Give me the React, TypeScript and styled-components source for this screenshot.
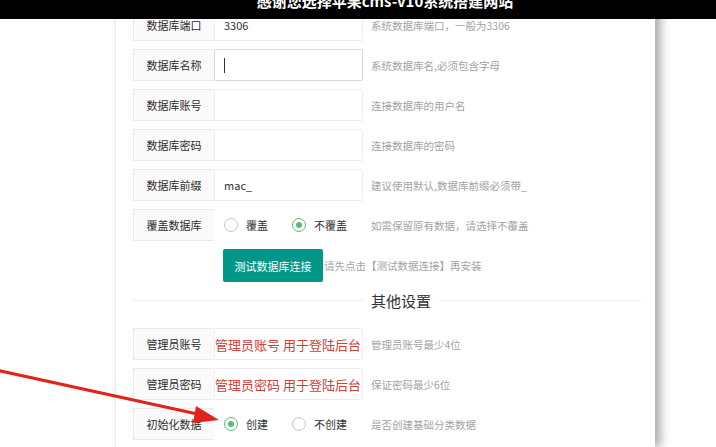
import * as React from 'react';
import styled, { createGlobalStyle } from 'styled-components';

const GlobalStyle = createGlobalStyle`
  html, body {
    margin: 0;
    padding: 0;
    background: #fff;
    font-family: "Noto Sans CJK SC", "Noto Sans", sans-serif;
  }
`;

const Page = styled.div`
  position: relative;
  width: 716px;
  height: 447px;
  overflow: hidden;
  background: #fff;
`;

const TopBar = styled.div`
  position: absolute;
  top: 0;
  left: 0;
  right: 0;
  height: 19px;
  background: #000;
  overflow: hidden;
  z-index: 2;
  display: flex;
  justify-content: center;
`;

const TopTitle = styled.div`
  color: #fff;
  font-size: 15px;
  font-weight: 700;
  line-height: 15px;
  margin-top: -7px;
  margin-left: 54px;
  white-space: nowrap;
`;

const Card = styled.div`
  margin-left: 115px;
  width: 540px;
  height: 447px;
  box-sizing: border-box;
  padding: 9px 0 0 17px;
  background: #fff;
  border-left: 1px solid #ececec;
  box-shadow: 6px 0 9px rgba(0, 0, 0, 0.32);
`;

const Form = styled.div`
  display: flex;
  flex-direction: column;
  gap: 8px;
`;

const Row = styled.div`
  display: flex;
  align-items: center;
  height: 32px;
`;

const Label = styled.div`
  width: 81px;
  height: 32px;
  box-sizing: border-box;
  border: 1px solid #eaeaea;
  border-right: none;
  background: #fafafa;
  color: #2e2e2e;
  font-size: 11px;
  display: flex;
  align-items: center;
  justify-content: center;
`;

const Input = styled.div<{ $focused?: boolean; $danger?: boolean }>`
  width: 149px;
  height: 32px;
  box-sizing: border-box;
  border: 1px solid ${(p) => (p.$focused ? '#d6d6d6' : '#eeeeee')};
  border-radius: 2px;
  background: #fff;
  padding-left: ${(p) => (p.$danger ? '0' : '9px')};
  color: ${(p) => (p.$danger ? '#c9423a' : '#333')};
  font-size: ${(p) => (p.$danger ? '13px' : '11px')};
  display: flex;
  align-items: center;
  white-space: nowrap;
  overflow: hidden;
`;

const Caret = styled.span`
  display: inline-block;
  width: 1px;
  height: 15px;
  background: #333;
`;

const Hint = styled.div<{ $tight?: boolean }>`
  margin-left: ${(p) => (p.$tight ? '1px' : '8px')};
  color: #a3a3a3;
  font-size: 10.5px;
  white-space: nowrap;
`;

const RadioGroup = styled.div`
  width: 149px;
  box-sizing: border-box;
  padding-left: 10px;
  display: flex;
  align-items: center;
  gap: 24px;
`;

const RadioItem = styled.div`
  display: flex;
  align-items: center;
  gap: 8px;
  font-size: 11px;
  color: #333;
`;

const RadioCircle = styled.span<{ $checked?: boolean }>`
  width: 14px;
  height: 14px;
  box-sizing: border-box;
  border-radius: 50%;
  border: 1px solid ${(p) => (p.$checked ? '#5fb878' : '#c6c6c6')};
  display: flex;
  align-items: center;
  justify-content: center;
  &::after {
    content: '';
    width: 6px;
    height: 6px;
    border-radius: 50%;
    background: ${(p) => (p.$checked ? '#5fb878' : 'transparent')};
  }
`;

const ButtonRow = styled.div`
  display: flex;
  align-items: center;
  padding-left: 90px;
  margin-top: 8px;
`;

const Button = styled.div`
  width: 100px;
  height: 33px;
  border-radius: 2px;
  background: #009688;
  color: #fff;
  font-size: 11px;
  display: flex;
  align-items: center;
  justify-content: center;
`;

const Legend = styled.div`
  width: 508px;
  height: 20px;
  margin: 8px 0 18px;
  display: flex;
  align-items: center;
  &::before,
  &::after {
    content: '';
    height: 1px;
    background: #eeeeee;
  }
  &::before {
    width: 230px;
  }
  &::after {
    flex: 1;
  }
`;

const LegendText = styled.span`
  padding: 0 8px;
  font-size: 15px;
  color: #333;
`;

const Arrow = styled.svg`
  position: absolute;
  left: 0;
  top: 0;
  pointer-events: none;
  z-index: 3;
`;

type Option = { label: string; checked?: boolean };

const Radios = ({ options }: { options: Option[] }) => (
  <RadioGroup>
    {options.map((o) => (
      <RadioItem key={o.label}>
        <RadioCircle $checked={o.checked} />
        {o.label}
      </RadioItem>
    ))}
  </RadioGroup>
);

const dbRows = [
  { label: '数据库端口', value: '3306', hint: '系统数据库端口，一般为3306' },
  { label: '数据库名称', value: '', hint: '系统数据库名,必须包含字母', focused: true },
  { label: '数据库账号', value: '', hint: '连接数据库的用户名' },
  { label: '数据库密码', value: '', hint: '连接数据库的密码' },
  { label: '数据库前缀', value: 'mac_', hint: '建议使用默认,数据库前缀必须带_' },
];

export default function App() {
  return (
    <Page>
      <GlobalStyle />
      <TopBar>
        <TopTitle>感谢您选择苹果cms-v10系统搭建网站</TopTitle>
      </TopBar>
      <Card>
        <Form>
          {dbRows.map((r) => (
            <Row key={r.label}>
              <Label>{r.label}</Label>
              <Input $focused={r.focused}>{r.focused ? <Caret /> : r.value}</Input>
              <Hint>{r.hint}</Hint>
            </Row>
          ))}
          <Row>
            <Label>覆盖数据库</Label>
            <Radios options={[{ label: '覆盖' }, { label: '不覆盖', checked: true }]} />
            <Hint>如需保留原有数据，请选择不覆盖</Hint>
          </Row>
        </Form>
        <ButtonRow>
          <Button>测试数据库连接</Button>
          <Hint $tight>请先点击【测试数据连接】再安装</Hint>
        </ButtonRow>
        <Legend>
          <LegendText>其他设置</LegendText>
        </Legend>
        <Form>
          <Row>
            <Label>管理员账号</Label>
            <Input $danger>管理员账号 用于登陆后台</Input>
            <Hint>管理员账号最少4位</Hint>
          </Row>
          <Row>
            <Label>管理员密码</Label>
            <Input $danger>管理员密码 用于登陆后台</Input>
            <Hint>保证密码最少6位</Hint>
          </Row>
          <Row>
            <Label>初始化数据</Label>
            <Radios options={[{ label: '创建', checked: true }, { label: '不创建' }]} />
            <Hint>是否创建基础分类数据</Hint>
          </Row>
        </Form>
      </Card>
      <Arrow width="716" height="447" viewBox="0 0 716 447">
        <line x1="-4" y1="370" x2="202" y2="415" stroke="#e3221c" strokeWidth="3" />
        <polygon points="219,420 196,406 193,423" fill="#e3221c" />
      </Arrow>
    </Page>
  );
}
